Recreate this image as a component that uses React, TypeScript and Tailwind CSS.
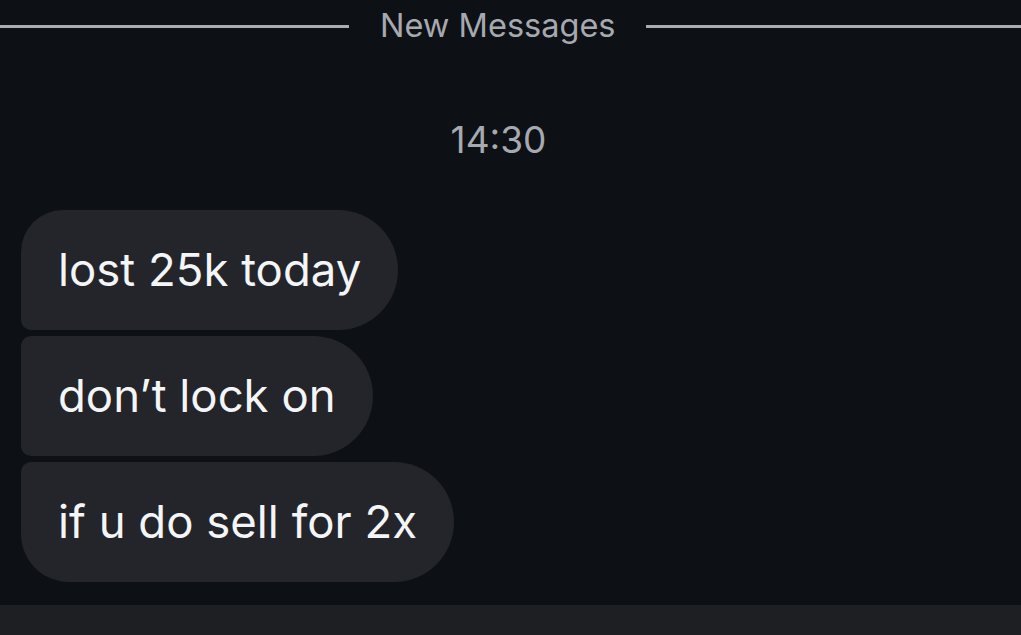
export default function App() {
  const messages = [
    { text: "lost 25k today", shape: "rounded-tl-[42px] rounded-bl-[10px]" },
    { text: "don\u2019t lock on", shape: "rounded-tl-[10px] rounded-bl-[10px]" },
    { text: "if u do sell for 2x", shape: "rounded-tl-[10px] rounded-bl-[48px]" },
  ];

  return (
    <div
      className="flex h-[635px] w-[1021px] flex-col overflow-hidden bg-[#0d1014]"
      style={{ fontFamily: "Inter, 'Liberation Sans', sans-serif" }}
    >
      {/* New messages divider */}
      <div className="flex h-[52px] items-center">
        <div className="h-[3px] w-[349px] bg-[#a9adb3]" />
        <span className="px-[31px] text-[32.5px] leading-none text-[#a6aab0]">New Messages</span>
        <div className="h-[3px] flex-1 bg-[#a9adb3]" />
      </div>

      {/* Timestamp */}
      <div className="mt-[69px] w-[997px] text-center text-[37px] leading-none text-[#a6aab0]">
        14:30
      </div>

      {/* Bubbles */}
      <div className="mt-[52px] flex flex-col items-start gap-[6px] pl-[21px]">
        {messages.map((m) => (
          <div
            key={m.text}
            className={`flex h-[120px] items-center rounded-r-[60px] bg-[#23252a] pl-[37px] pr-[37px] text-[45.5px] text-[#f4f5f6] ${m.shape}`}
          >
            {m.text}
          </div>
        ))}
      </div>

      <div className="flex-1" />

      {/* Composer strip */}
      <div className="h-[30px] bg-[#1e1f22]" />
    </div>
  );
}
